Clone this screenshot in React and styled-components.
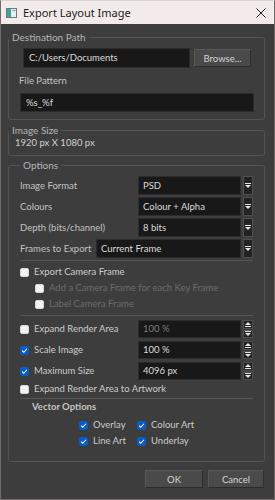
import React from "react";
import styled, { createGlobalStyle } from "styled-components";

const Global = createGlobalStyle`
  html, body { margin: 0; padding: 0; background: #3d3d3d; }
  * { box-sizing: border-box; }
`;

const FONT = `Lato, "Noto Sans", "Liberation Sans", sans-serif`;

const Window = styled.div`
  width: 275px;
  height: 500px;
  border: 1px solid #6e6a69;
  border-top-color: #d9d2d0;
  background: #3d3d3d;
  display: flex;
  flex-direction: column;
  font-family: ${FONT};
  font-size: 9.5px;
  line-height: 12px;
  color: #cccccc;
  overflow: hidden;
`;

const TitleBar = styled.div`
  height: 23px;
  flex: none;
  background: #f3ebe9;
  display: flex;
  align-items: center;
  padding: 0 8px 0 5px;
  gap: 6px;
  color: #1b1b1b;
  font-family: "Noto Sans", "Open Sans", sans-serif;
  font-size: 11px;
`;

const TitleText = styled.span`
  flex: 1;
`;

const Close = styled.svg`
  width: 10px;
  height: 10px;
`;

const Body = styled.div`
  flex: 1;
  display: flex;
  flex-direction: column;
  padding: 7px 9px 0 7px;
`;

const Group = styled.fieldset`
  margin: 0 0 ${(p) => p.$mb || 0}px 0;
  border: 1px solid #545454;
  border-radius: 3px;
  padding: ${(p) => p.$pad || "0"};
  min-width: 0;
`;

const Legend = styled.legend`
  padding: 0 3px 0 3px;
  margin-left: 0;
  font-size: 10px;
  line-height: 13px;
  color: #b5b5b5;
`;

const PathRow = styled.div`
  display: flex;
  gap: 4px;
  padding: 0 13px 0 14px;
  margin-top: 4px;
`;

const TextField = styled.div`
  flex: 1;
  height: ${(p) => p.$h || 20}px;
  background: #181818;
  border: 1px solid #2c2c2c;
  color: ${(p) => (p.$dim ? "#7b7b7b" : "#dcdcdc")};
  display: flex;
  align-items: center;
  padding-left: ${(p) => p.$pl || 4}px;
`;

const Button = styled.button`
  width: ${(p) => p.$w}px;
  height: 18px;
  margin-top: ${(p) => p.$mt || 0}px;
  background: #4a4a4a;
  border: 1px solid #585858;
  border-bottom-color: #2c2c2c;
  border-right-color: #2f2f2f;
  color: #d4d4d4;
  font-family: ${FONT};
  font-size: 9.5px;
  padding: 0;
`;

const FieldLabel = styled.div`
  color: #c2c2c2;
  padding-left: ${(p) => p.$pl || 0}px;
  margin: ${(p) => p.$m || 0};
`;

const PatternWrap = styled.div`
  padding: 0 10px 0 11px;
`;

const SizeText = styled.div`
  padding: 0 0 7px 6px;
  line-height: 11px;
  color: #cfcfcf;
`;

const Rows = styled.div`
  display: flex;
  flex-direction: column;
  gap: ${(p) => p.$gap || 2}px;
  margin-top: ${(p) => p.$mt || 0}px;
`;

const FormRow = styled.div`
  display: flex;
  align-items: center;
  height: 19px;
`;

const RowLabel = styled.div`
  width: ${(p) => p.$w}px;
  flex: none;
  color: #c2c2c2;
`;

const Combo = styled.div`
  flex: 1;
  display: flex;
  height: 100%;
  gap: 2px;
`;

const SideBtn = styled.div`
  width: 10px;
  flex: none;
  background: #232323;
  border: 1px solid #4f4f4f;
  display: flex;
  align-items: center;
  justify-content: center;
`;

const SpinCol = styled.div`
  width: 10px;
  flex: none;
  display: flex;
  flex-direction: column;
  gap: 1px;
`;

const SpinBtn = styled(SideBtn)`
  flex: 1;
`;

const Sep = styled.div`
  height: 1px;
  background: #555;
  margin: ${(p) => p.$m};
`;

const CheckRow = styled.label`
  display: flex;
  align-items: center;
  gap: 5px;
  height: ${(p) => p.$h || 16}px;
  padding-left: ${(p) => p.$indent || 0}px;
  color: ${(p) => (p.$disabled ? "#6c6c6c" : "#cccccc")};
`;

const Box = styled.span`
  width: 9px;
  height: 9px;
  flex: none;
  border-radius: 2px;
  background: ${(p) => (p.$checked ? "#0a5bc4" : "#f2f2f2")};
  border: 1px solid ${(p) => (p.$checked ? "#0a5bc4" : "#d8d8d8")};
  display: flex;
  align-items: center;
  justify-content: center;
`;

const SpinRow = styled.div`
  display: flex;
  align-items: center;
  height: 18px;
`;

const SpinLabel = styled(CheckRow)`
  width: 118px;
  flex: none;
`;

const VecTitle = styled.div`
  font-weight: bold;
  color: #c4c4c4;
  padding-left: 12px;
  margin-top: 2px;
`;

const VecGrid = styled.div`
  display: grid;
  grid-template-columns: 58px auto;
  padding-left: 59px;
  margin-top: 4px;
`;

const Footer = styled.div`
  display: flex;
  justify-content: flex-end;
  gap: 5px;
  padding: 8px 1px 0 0;
`;

const Spacer = styled.div`
  height: ${(p) => p.$h}px;
`;

const Tick = () => (
  <svg width="7" height="7" viewBox="0 0 8 8">
    <path d="M1.3 4.2 L3.2 6 L6.8 2" fill="none" stroke="#fff" strokeWidth="1.2" />
  </svg>
);

const Check = ({ checked, disabled, indent, h, children }) => (
  <CheckRow $disabled={disabled} $indent={indent} $h={h}>
    <Box $checked={checked}>{checked && <Tick />}</Box>
    {children}
  </CheckRow>
);

const Down = () => (
  <svg width="6" height="5" viewBox="0 0 6 5">
    <rect x="0" y="0" width="6" height="1" fill="#e6e6e6" />
    <path d="M0 2 L6 2 L3 5 Z" fill="#e6e6e6" />
  </svg>
);

const Up = () => (
  <svg width="6" height="5" viewBox="0 0 6 5">
    <path d="M0 3 L6 3 L3 0 Z" fill="#e6e6e6" />
    <rect x="0" y="4" width="6" height="1" fill="#e6e6e6" />
  </svg>
);

const ComboBox = ({ value }) => (
  <Combo>
    <TextField $h={19}>{value}</TextField>
    <SideBtn>
      <Down />
    </SideBtn>
  </Combo>
);

const SpinBox = ({ value, dim }) => (
  <Combo>
    <TextField $h={18} $dim={dim}>{value}</TextField>
    <SpinCol>
      <SpinBtn>
        <Up />
      </SpinBtn>
      <SpinBtn>
        <Down />
      </SpinBtn>
    </SpinCol>
  </Combo>
);

const AppIcon = () => (
  <svg width="11" height="10" viewBox="0 0 11 10">
    <rect x="0.5" y="0.5" width="10" height="9" fill="#e8eef0" stroke="#6c7a80" />
    <rect x="1" y="1" width="4" height="8" fill="#3aa6a0" />
    <rect x="6" y="2" width="4" height="1" fill="#8aa" />
  </svg>
);

export default function App() {
  return (
    <>
      <Global />
      <Window>
        <TitleBar>
          <AppIcon />
          <TitleText>Export Layout Image</TitleText>
          <Close viewBox="0 0 10 10">
            <path d="M0.5 0.5 L9.5 9.5 M9.5 0.5 L0.5 9.5" stroke="#222" strokeWidth="1" />
          </Close>
        </TitleBar>
        <Body>
          <Group $mb={4} $pad="0 0 7px 0">
            <Legend>Destination Path</Legend>
            <PathRow>
              <TextField $h={20} $pl={5}>C:/Users/Documents</TextField>
              <Button $w={57} $mt={1}>Browse...</Button>
            </PathRow>
            <FieldLabel $pl={10} $m="7px 0 6px 0">File Pattern</FieldLabel>
            <PatternWrap>
              <TextField $h={19} $pl={5}>%s_%f</TextField>
            </PatternWrap>
          </Group>

          <Group $mb={3}>
            <Legend>Image Size</Legend>
            <SizeText>1920 px X 1080 px</SizeText>
          </Group>

          <Group $pad="0 11px 0 11px">
            <Legend>Options</Legend>
            <Rows $mt={4}>
              <FormRow>
                <RowLabel $w={118}>Image Format</RowLabel>
                <ComboBox value="PSD" />
              </FormRow>
              <FormRow>
                <RowLabel $w={118}>Colours</RowLabel>
                <ComboBox value="Colour + Alpha" />
              </FormRow>
              <FormRow>
                <RowLabel $w={118}>Depth (bits/channel)</RowLabel>
                <ComboBox value="8 bits" />
              </FormRow>
              <FormRow>
                <RowLabel $w={76}>Frames to Export</RowLabel>
                <ComboBox value="Current Frame" />
              </FormRow>
            </Rows>
            <Sep $m="2px 0 3px 0" />
            <Check>Export Camera Frame</Check>
            <Check disabled indent={15}>Add a Camera Frame for each Key Frame</Check>
            <Check disabled indent={15}>Label Camera Frame</Check>
            <Sep $m="3px 0 4px 0" />
            <Rows $gap={3}>
              <SpinRow>
                <SpinLabel>
                  <Box />
                  Expand Render Area
                </SpinLabel>
                <SpinBox value="100 %" dim />
              </SpinRow>
              <SpinRow>
                <SpinLabel>
                  <Box $checked><Tick /></Box>
                  Scale Image
                </SpinLabel>
                <SpinBox value="100 %" />
              </SpinRow>
              <SpinRow>
                <SpinLabel>
                  <Box $checked><Tick /></Box>
                  Maximum Size
                </SpinLabel>
                <SpinBox value="4096 px" />
              </SpinRow>
            </Rows>
            <Check h={18}>Expand Render Area to Artwork</Check>
            <Sep $m="0 0 1px 0" />
            <VecTitle>Vector Options</VecTitle>
            <VecGrid>
              <Check checked>Overlay</Check>
              <Check checked>Colour Art</Check>
              <Check checked>Line Art</Check>
              <Check checked>Underlay</Check>
            </VecGrid>
            <Spacer $h={12} />
          </Group>

          <Footer>
            <Button $w={58}>OK</Button>
            <Button $w={56}>Cancel</Button>
          </Footer>
        </Body>
      </Window>
    </>
  );
}
